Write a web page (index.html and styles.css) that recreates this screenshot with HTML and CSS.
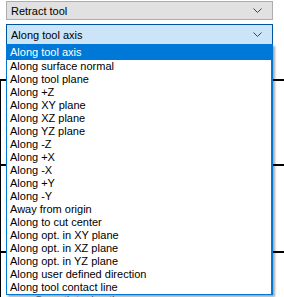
FILE: index.html
```html
<!DOCTYPE html>
<html>
<head>
<meta charset="utf-8">
<title>Retract settings</title>
<link rel="stylesheet" href="styles.css">
</head>
<body>
<div class="panel">
  <div class="combo combo-plain">
    <span class="combo-text">Retract tool</span>
    <svg class="chevron" width="9" height="5" viewBox="0 0 9 5"><path d="M0.5 0.5 L4.5 4.5 L8.5 0.5" fill="none" stroke="#444" stroke-width="1"/></svg>
  </div>
  <div class="combo combo-open">
    <span class="combo-text">Along tool axis</span>
    <svg class="chevron" width="9" height="5" viewBox="0 0 9 5"><path d="M0.5 0.5 L4.5 4.5 L8.5 0.5" fill="none" stroke="#444" stroke-width="1"/></svg>
  </div>

  <div class="groups">
    <div class="group g1"></div>
    <div class="group g2"></div>
    <div class="group g3"><span class="peek">Smooth tool path</span></div>
  </div>

  <ul class="dropdown">
    <li class="selected">Along tool axis</li>
    <li>Along surface normal</li>
    <li>Along tool plane</li>
    <li>Along +Z</li>
    <li>Along XY plane</li>
    <li>Along XZ plane</li>
    <li>Along YZ plane</li>
    <li>Along -Z</li>
    <li>Along +X</li>
    <li>Along -X</li>
    <li>Along +Y</li>
    <li>Along -Y</li>
    <li>Away from origin</li>
    <li>Along to cut center</li>
    <li>Along opt. in XY plane</li>
    <li>Along opt. in XZ plane</li>
    <li>Along opt. in YZ plane</li>
    <li>Along user defined direction</li>
    <li>Along tool contact line</li>
  </ul>
</div>
</body>
</html>
```

FILE: styles.css
```css
body {
  margin: 0;
  background: #fff;
  font-family: "Liberation Sans", Arial, sans-serif;
  font-size: 11px;
  color: #000;
  overflow: hidden;
}
* { box-sizing: border-box; }

.panel {
  position: relative;
  width: 284px;
  height: 297px;
  padding: 1px 11px 0 6px;
}

.combo {
  display: flex;
  align-items: center;
  justify-content: space-between;
  padding: 0 10px 0 4px;
  border: 1px solid #adadad;
}
.combo-plain {
  height: 19px;
  background: #e1e1e1;
}
.combo-open {
  margin-top: 4px;
  height: 21px;
  background: #cce4f7;
  border-color: #005499;
}
.chevron { display: block; }

.groups {
  margin: 0 -11px 0 -6px;
  padding-top: 34px;
}
.group {
  border-top: 2px solid #000;
  border-left: 1px solid #000;
}
.g1 { height: 85px; }
.g2 { height: 87px; }
.g3 {
  height: 46px;
  padding: 41px 0 0 34px;
}
.peek { color: #5a6b8c; }

.dropdown {
  position: absolute;
  top: 44px;
  left: 6px;
  width: 267px;
  margin: 0;
  padding: 0;
  list-style: none;
  background: #fff;
  border: 1px solid #0078d7;
  border-right-width: 2px;
  box-shadow: 2px 2px 2px rgba(0, 0, 0, .35);
}
.dropdown li {
  height: 13px;
  line-height: 13px;
  padding-left: 3px;
  white-space: nowrap;
}
.dropdown li.selected {
  height: 15px;
  line-height: 15px;
  background: #0078d7;
  color: #fff;
}
```
